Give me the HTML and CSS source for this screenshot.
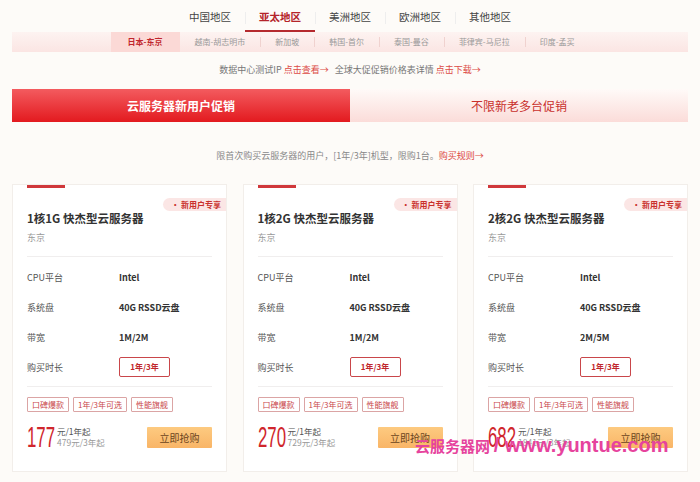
FILE: index.html
```html
<!DOCTYPE html>
<html lang="zh-CN">
<head>
  <meta charset="UTF-8">
  <title>云服务器促销</title>
  <link rel="stylesheet" href="styles.css">
</head>
<body>

  <div class="page">
    <div class="region-tabs">
      <div class="region">中国地区</div>
      <div class="region active">亚太地区</div>
      <div class="region">美洲地区</div>
      <div class="region">欧洲地区</div>
      <div class="region">其他地区</div>
    </div>

    <div class="city-bar">
      <div class="city active">日本-东京</div>
      <div class="city">越南-胡志明市</div>
      <div class="city">新加坡</div>
      <div class="city">韩国-首尔</div>
      <div class="city">泰国-曼谷</div>
      <div class="city">菲律宾-马尼拉</div>
      <div class="city">印度-孟买</div>
    </div>

    <div class="notice">
      数据中心测试IP <a class="link">点击查看→</a>
      <span class="gap"></span>全球大促促销价格表详情 <a class="link">点击下载→</a>
    </div>

    <div class="promo-tabs">
      <div class="promo active">云服务器新用户促销</div>
      <div class="promo">不限新老多台促销</div>
    </div>

    <div class="rule">限首次购买云服务器的用户，[1年/3年]机型，限购1台。<a class="link">购买规则→</a></div>

    <div class="cards">
      <div class="card">
        <div class="card-bar"></div>
        <div class="badge">• 新用户专享</div>
        <div class="card-title">1核1G 快杰型云服务器</div>
        <div class="card-loc">东京</div>
        <div class="specs">
          <div class="spec"><span class="spec-label">CPU平台</span><span class="spec-value">Intel</span></div>
          <div class="spec"><span class="spec-label">系统盘</span><span class="spec-value">40G RSSD云盘</span></div>
          <div class="spec"><span class="spec-label">带宽</span><span class="spec-value">1M/2M</span></div>
          <div class="spec"><span class="spec-label">购买时长</span><span class="duration">1年/3年</span></div>
        </div>
        <div class="tags">
          <span class="tag">口碑爆款</span><span class="tag">1年/3年可选</span><span class="tag">性能旗舰</span>
        </div>
        <div class="buy">
          <div class="price">
            <span class="price-num"><span>177</span></span>
            <div class="price-info">
              <div class="per-year">元/1年起</div>
              <div class="three-year">479元/3年起</div>
            </div>
          </div>
          <div class="buy-btn">立即抢购</div>
        </div>
      </div>

      <div class="card">
        <div class="card-bar"></div>
        <div class="badge">• 新用户专享</div>
        <div class="card-title">1核2G 快杰型云服务器</div>
        <div class="card-loc">东京</div>
        <div class="specs">
          <div class="spec"><span class="spec-label">CPU平台</span><span class="spec-value">Intel</span></div>
          <div class="spec"><span class="spec-label">系统盘</span><span class="spec-value">40G RSSD云盘</span></div>
          <div class="spec"><span class="spec-label">带宽</span><span class="spec-value">1M/2M</span></div>
          <div class="spec"><span class="spec-label">购买时长</span><span class="duration">1年/3年</span></div>
        </div>
        <div class="tags">
          <span class="tag">口碑爆款</span><span class="tag">1年/3年可选</span><span class="tag">性能旗舰</span>
        </div>
        <div class="buy">
          <div class="price">
            <span class="price-num"><span>270</span></span>
            <div class="price-info">
              <div class="per-year">元/1年起</div>
              <div class="three-year">729元/3年起</div>
            </div>
          </div>
          <div class="buy-btn">立即抢购</div>
        </div>
      </div>

      <div class="card">
        <div class="card-bar"></div>
        <div class="badge">• 新用户专享</div>
        <div class="card-title">2核2G 快杰型云服务器</div>
        <div class="card-loc">东京</div>
        <div class="specs">
          <div class="spec"><span class="spec-label">CPU平台</span><span class="spec-value">Intel</span></div>
          <div class="spec"><span class="spec-label">系统盘</span><span class="spec-value">40G RSSD云盘</span></div>
          <div class="spec"><span class="spec-label">带宽</span><span class="spec-value">2M/5M</span></div>
          <div class="spec"><span class="spec-label">购买时长</span><span class="duration">1年/3年</span></div>
        </div>
        <div class="tags">
          <span class="tag">口碑爆款</span><span class="tag">1年/3年可选</span><span class="tag">性能旗舰</span>
        </div>
        <div class="buy">
          <div class="price">
            <span class="price-num"><span>682</span></span>
            <div class="price-info">
              <div class="per-year">元/1年起</div>
              <div class="three-year">1841元/3年起</div>
            </div>
          </div>
          <div class="buy-btn">立即抢购</div>
        </div>
      </div>
    </div>
  </div>

  <!-- 水印 -->
  <div class="watermark"><span class="wm-cn">云服务器网</span> <span class="wm-en">/ www.yuntue.com</span></div>

</body>
</html>
```

FILE: styles.css
```css
body {
  margin: 0;
  background: #fdfbf8;
  color: #333;
  font-family: "Noto Sans CJK SC", "Noto Sans", sans-serif;
}

.page {
  padding: 0 12px;
}

.region-tabs {
  display: flex;
  justify-content: center;
  height: 32px;
}

.region {
  width: 70px;
  height: 30px;
  line-height: 34px;
  text-align: center;
  font-size: 10.5px;
  color: #444;
  position: relative;
}

.region + .region::before {
  content: "";
  position: absolute;
  left: 0;
  top: 12px;
  width: 1px;
  height: 12px;
  background: #eee;
}

.region.active {
  color: #b4242a;
  font-weight: bold;
  border-bottom: 2px solid #b52a2e;
}

.city-bar {
  display: flex;
  justify-content: center;
  height: 20px;
  background: linear-gradient(#fdf3f1, #fbe5e3);
}

.city {
  padding: 0 15px;
  line-height: 20px;
  font-size: 8px;
  color: #999;
  position: relative;
}

.city + .city::before {
  content: "";
  position: absolute;
  left: 0;
  top: 5px;
  width: 1px;
  height: 10px;
  background: #f0d2cf;
}

.city.active {
  padding: 0 17px;
  background: #fbd9d6;
  color: #c0262c;
  font-weight: bold;
}

.city.active + .city::before {
  display: none;
}

.notice {
  margin-top: 12px;
  text-align: center;
  font-size: 9px;
  line-height: 12px;
  color: #777;
}

.link {
  color: #dc4a45;
}

.gap {
  display: inline-block;
  width: 4px;
}

.promo-tabs {
  display: flex;
  margin-top: 13px;
  height: 33px;
}

.promo {
  flex: 1;
  line-height: 33px;
  text-align: center;
  font-size: 12px;
  color: #c9302c;
  background: linear-gradient(#fffaf8, #fbdcd9);
}

.promo.active {
  color: #fff;
  font-weight: bold;
  background: linear-gradient(#f35b5f, #e31a1f);
}

.rule {
  margin-top: 28px;
  text-align: center;
  font-size: 9px;
  line-height: 12px;
  color: #888;
}

.cards {
  display: grid;
  grid-template-columns: repeat(3, 1fr);
  gap: 15.5px;
  margin-top: 22px;
}

.card {
  position: relative;
  background: #fff;
  border: 1px solid #f2eeea;
  padding: 0 14px 22px;
}

.card-bar {
  width: 38px;
  height: 3px;
  background: #d0383b;
}

.badge {
  position: absolute;
  right: 0;
  top: 13px;
  height: 13px;
  line-height: 13px;
  padding: 0 5px 0 8px;
  border-radius: 7px 0 0 7px;
  background: #fbe6e5;
  color: #c9302c;
  font-size: 8px;
  font-weight: bold;
}

.card-title {
  margin-top: 23px;
  font-size: 11.5px;
  line-height: 14px;
  font-weight: bold;
  color: #333;
}

.card-loc {
  margin-top: 7px;
  font-size: 9px;
  line-height: 12px;
  color: #999;
}

.specs {
  margin-top: 12px;
  padding: 5px 0 4px;
  border-top: 1px solid #f0eeee;
  border-bottom: 1px solid #f0eeee;
}

.spec {
  display: flex;
  align-items: center;
  height: 30px;
  font-size: 9px;
}

.spec-label {
  width: 92px;
  color: #555;
}

.spec-value {
  font-weight: bold;
  color: #333;
}

.duration {
  width: 49px;
  height: 18px;
  line-height: 18px;
  text-align: center;
  border: 1px solid #c9464a;
  border-radius: 2px;
  color: #c0262c;
  font-size: 8px;
  font-weight: bold;
}

.tags {
  display: flex;
  gap: 4px;
  margin-top: 10px;
}

.tag {
  height: 13px;
  line-height: 13px;
  padding: 0 4px;
  border: 1px solid #dba4a4;
  border-radius: 1px;
  color: #c9464a;
  font-size: 8px;
}

.buy {
  display: flex;
  justify-content: space-between;
  align-items: center;
  margin-top: 13px;
}

.price {
  display: flex;
  align-items: center;
}

.price-num {
  display: inline-block;
  width: 29px;
  height: 24px;
  white-space: nowrap;
  color: #d0262c;
  font-family: "Liberation Sans", sans-serif;
  font-size: 29px;
  line-height: 24px;
}

.price-num span {
  display: inline-block;
  transform: scaleX(0.58);
  transform-origin: left center;
}

.price-info {
  margin-left: 1px;
  font-size: 8.5px;
  line-height: 11px;
}

.per-year {
  color: #555;
}

.three-year {
  color: #999;
}

.buy-btn {
  width: 65px;
  height: 21px;
  line-height: 21px;
  text-align: center;
  font-size: 10px;
  color: #6b4520;
  background: linear-gradient(#fdca80, #f9b567);
  border-radius: 1px;
}

.watermark {
  position: absolute;
  left: 415px;
  top: 433px;
  color: #e6439d;
  font-weight: bold;
  white-space: nowrap;
}

.wm-cn {
  font-size: 15px;
}

.wm-en {
  font-family: "Liberation Sans", sans-serif;
  font-size: 20px;
}
```
